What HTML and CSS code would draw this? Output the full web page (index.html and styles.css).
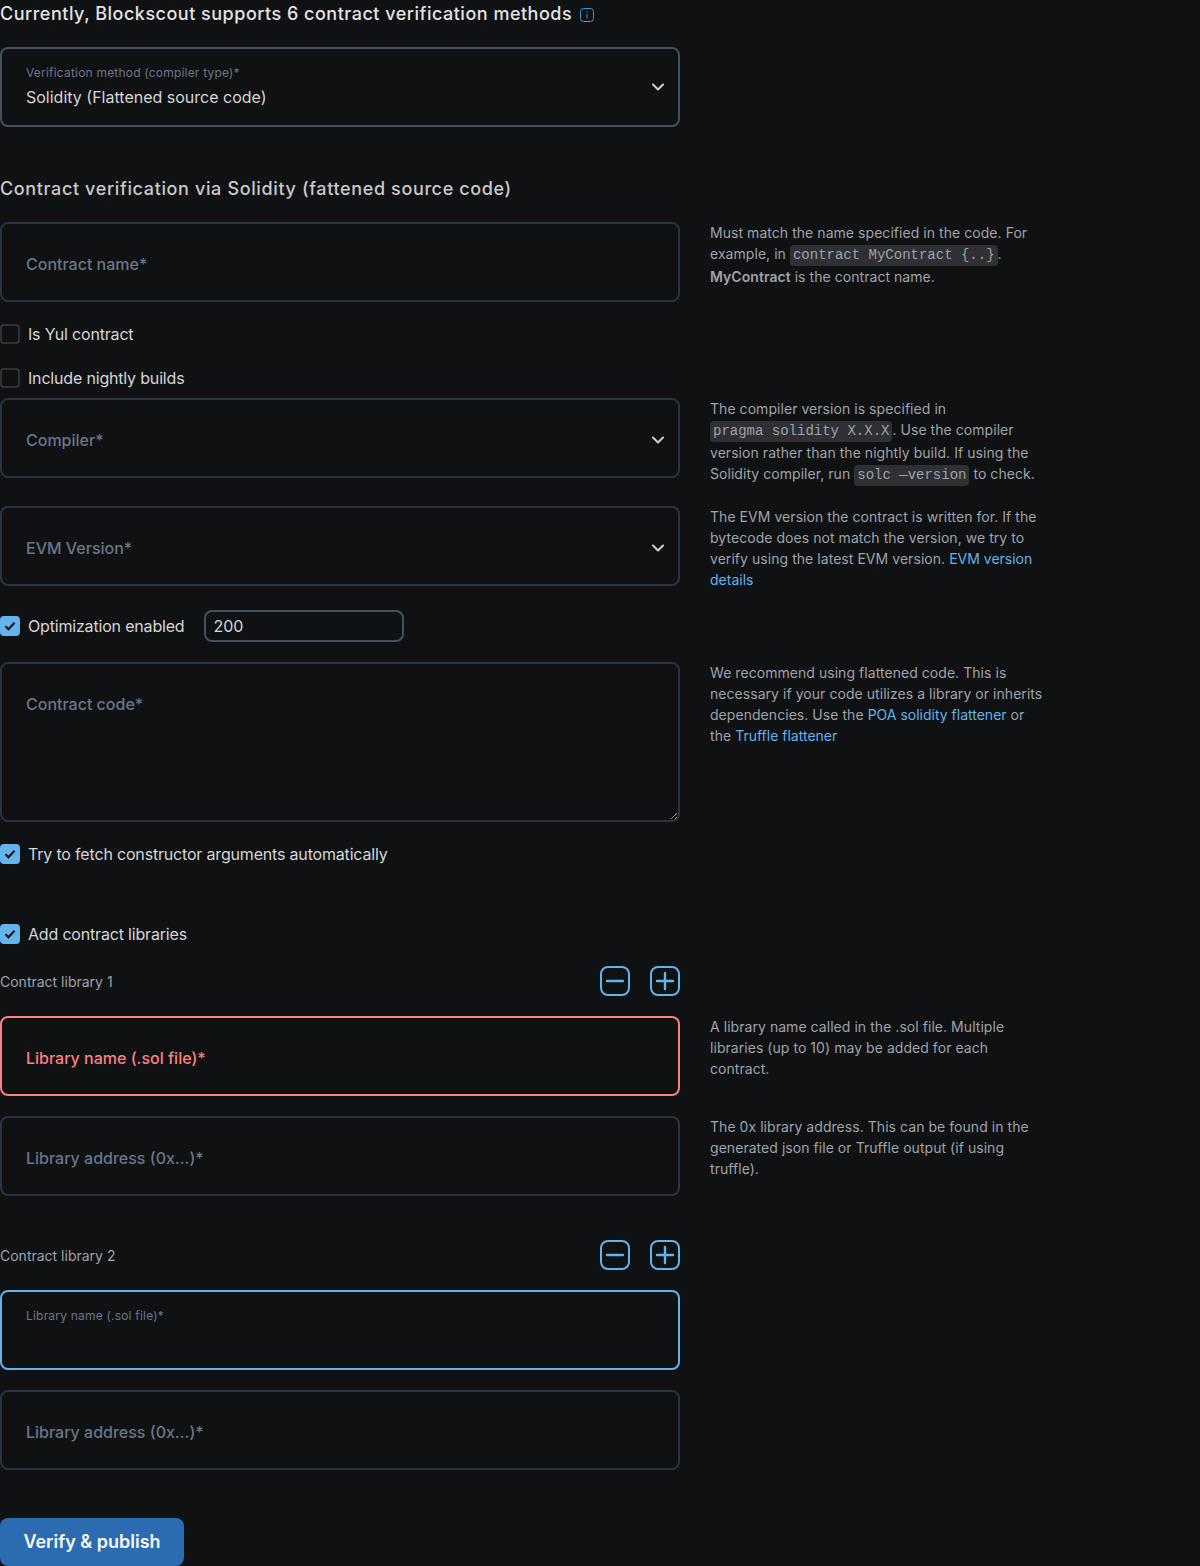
FILE: index.html
```html
<!DOCTYPE html>
<html>
<head>
    <meta charset="utf-8">
    <link rel="stylesheet" href="styles.css">
</head>
<body>
    <h2 class="title">Currently, Blockscout supports 6 contract verification methods
        <svg class="info" width="14" height="14" viewBox="0 0 14 14"><rect x=".5" y=".5" width="13" height="13" rx="3"/><path class="info-dot" d="M7 3.4v1.4M7 6.2v4.2"/></svg>
    </h2>

    <form>
        <div class="select select-filled">
            <div>
                <div class="float-label">Verification method (compiler type)*</div>
                <div class="select-value">Solidity (Flattened source code)</div>
            </div>
            <svg class="chevron" width="12" height="8" viewBox="0 0 12 8"><path d="M1 1.5l5 5 5-5"/></svg>
        </div>

        <h3 class="subtitle">Contract verification via Solidity (fattened source code)</h3>

        <div class="row">
            <input class="field" placeholder="Contract name*">
            <div class="hint">Must match the name specified in the code. For example, in <code>contract MyContract {..}</code>. <b>MyContract</b> is the contract name.</div>
        </div>

        <label class="check gap-22"><span class="box"></span>Is Yul contract</label>
        <label class="check gap-24"><span class="box"></span>Include nightly builds</label>

        <div class="row gap-10">
            <div class="select"><span>Compiler*</span><svg class="chevron" width="12" height="8" viewBox="0 0 12 8"><path d="M1 1.5l5 5 5-5"/></svg></div>
            <div class="hint">The compiler version is specified in <code>pragma solidity X.X.X</code>. Use the compiler version rather than the nightly build. If using the Solidity compiler, run <code>solc —version</code> to check.</div>
        </div>

        <div class="row gap-20">
            <div class="select"><span>EVM Version*</span><svg class="chevron" width="12" height="8" viewBox="0 0 12 8"><path d="M1 1.5l5 5 5-5"/></svg></div>
            <div class="hint">The EVM version the contract is written for. If the bytecode does not match the version, we try to verify using the latest EVM version. <a href="#">EVM version details</a></div>
        </div>

        <div class="optimization gap-20">
            <label class="check"><span class="box box-on"><svg width="12" height="10" viewBox="0 0 12 10"><path d="M1.5 5.2l3 3 6-6.4"/></svg></span>Optimization enabled</label>
            <input class="runs" value="200">
        </div>

        <div class="row gap-20">
            <textarea class="field code-field" placeholder="Contract code*"></textarea>
            <div class="hint">We recommend using flattened code. This is necessary if your code utilizes a library or inherits dependencies. Use the <a href="#">POA solidity flattener</a> or the <a href="#">Truffle flattener</a></div>
        </div>

        <label class="check gap-22"><span class="box box-on"><svg width="12" height="10" viewBox="0 0 12 10"><path d="M1.5 5.2l3 3 6-6.4"/></svg></span>Try to fetch constructor arguments automatically</label>
        <label class="check gap-60"><span class="box box-on"><svg width="12" height="10" viewBox="0 0 12 10"><path d="M1.5 5.2l3 3 6-6.4"/></svg></span>Add contract libraries</label>

        <div class="lib-head gap-22">
            <span>Contract library 1</span>
            <button type="button" class="square"><svg width="30" height="30" viewBox="0 0 30 30"><path d="M7 15h16"/></svg></button>
            <button type="button" class="square"><svg width="30" height="30" viewBox="0 0 30 30"><path d="M7 15h16M15 7v16"/></svg></button>
        </div>
        <div class="row gap-20">
            <input class="field field-error" placeholder="Library name (.sol file)*">
            <div class="hint">A library name called in the .sol file. Multiple libraries (up to 10) may be added for each contract.</div>
        </div>
        <div class="row gap-20">
            <input class="field" placeholder="Library address (0x...)*">
            <div class="hint">The 0x library address. This can be found in the generated json file or Truffle output (if using truffle).</div>
        </div>

        <div class="lib-head gap-44">
            <span>Contract library 2</span>
            <button type="button" class="square"><svg width="30" height="30" viewBox="0 0 30 30"><path d="M7 15h16"/></svg></button>
            <button type="button" class="square"><svg width="30" height="30" viewBox="0 0 30 30"><path d="M7 15h16M15 7v16"/></svg></button>
        </div>
        <div class="row gap-20">
            <div class="field field-focus"><div class="float-label">Library name (.sol file)*</div></div>
        </div>
        <div class="row gap-20">
            <input class="field" placeholder="Library address (0x...)*">
        </div>

        <button type="button" class="submit">Verify &amp; publish</button>
    </form>
</body>
</html>
```

FILE: styles.css
```css
body {
    font-family: "Inter", "Liberation Sans", sans-serif;
    font-size: 16px;
    line-height: 24px;
    background-color: #101112;
    color: #d6d6d7;
    margin: 0;
    height: 1566px;
    overflow: hidden;
}

.title {
    font-size: 18px;
    font-weight: 500;
    line-height: 28px;
    letter-spacing: 0.5px;
    color: #e3e3e4;
    margin: 0 0 19px;
    white-space: nowrap;
}

.info {
    vertical-align: -2px;
    margin-left: 3px;
}

.info rect {
    fill: none;
    stroke: #4299e1;
}

.info-dot {
    fill: none;
    stroke: #4299e1;
    stroke-width: 1;
}

.subtitle {
    font-size: 18px;
    font-weight: 500;
    line-height: 28px;
    letter-spacing: 0.63px;
    color: #c9c9ca;
    margin: 48px 0 19px;
    white-space: nowrap;
}

.row {
    display: grid;
    grid-template-columns: 680px 335px;
    column-gap: 30px;
    align-items: start;
}

.gap-10 { margin-top: 10px; }
.gap-20 { margin-top: 20px; }
.gap-22 { margin-top: 22px; }
.gap-24 { margin-top: 24px; }
.gap-44 { margin-top: 44px; }
.gap-60 { margin-top: 60px; }

.field,
.select {
    display: block;
    box-sizing: border-box;
    width: 680px;
    height: 80px;
    margin: 0;
    padding: 4px 24px 0;
    font: inherit;
    font-weight: 500;
    color: #69778a;
    background: transparent;
    border: 2px solid #2b3442;
    border-radius: 8px;
    outline: none;
}

.field::placeholder {
    color: #69778a;
    opacity: 1;
}

.select {
    display: flex;
    align-items: center;
    justify-content: space-between;
    padding-right: 14px;
}

.select-filled {
    border-color: #434f62;
    padding-top: 0;
}

.select-value {
    font-weight: 400;
    color: #d6d6d7;
    margin-top: 4px;
}

.float-label {
    font-size: 12px;
    font-weight: 400;
    line-height: 16px;
    letter-spacing: 0.2px;
    color: #69778a;
}

.chevron path {
    fill: none;
    stroke: #d0d0d1;
    stroke-width: 2;
    stroke-linecap: round;
    stroke-linejoin: round;
}

.field-error {
    border-color: #fc8181;
}

.field-error::placeholder {
    color: #fc8181;
}

.field-focus {
    border-color: #63b3ed;
    padding-top: 16px;
}

.code-field {
    height: 160px;
    padding-top: 28px;
    line-height: 24px;
    resize: vertical;
}

.check {
    display: flex;
    align-items: center;
    gap: 8px;
    height: 20px;
    letter-spacing: -0.18px;
}

.box {
    box-sizing: border-box;
    display: flex;
    align-items: center;
    justify-content: center;
    width: 20px;
    height: 20px;
    border: 2px solid #2f3338;
    border-radius: 4px;
}

.box-on {
    background: #63b3ed;
    border-color: #63b3ed;
}

.box-on path {
    fill: none;
    stroke: #101112;
    stroke-width: 2;
}

.optimization {
    display: flex;
    align-items: center;
    gap: 20px;
}

.runs {
    box-sizing: border-box;
    width: 200px;
    height: 32px;
    padding: 0 7px;
    font: inherit;
    color: #d6d6d7;
    background: transparent;
    border: 2px solid #434f62;
    border-radius: 8px;
    outline: none;
}

.hint {
    font-size: 14px;
    line-height: 21px;
    letter-spacing: 0.05px;
    color: #9fa3ab;
}

.hint b {
    font-weight: 600;
}

.hint a {
    color: #63b3ed;
    letter-spacing: 0;
    text-decoration: none;
}

.hint code {
    display: inline-block;
    font-family: "Liberation Mono", monospace;
    font-size: 14px;
    line-height: 21px;
    letter-spacing: 0;
    padding: 0 3px;
    background: #2e3033;
    border-radius: 4px;
}

.lib-head {
    display: flex;
    align-items: center;
    gap: 20px;
    width: 680px;
    font-size: 14px;
    color: #9fa3ab;
}

.lib-head span {
    margin-right: auto;
    padding-top: 2px;
}

.square {
    box-sizing: border-box;
    width: 30px;
    height: 30px;
    padding: 0;
    background: transparent;
    border: 2px solid #63b3ed;
    border-radius: 8px;
}

.square svg {
    display: block;
    margin: -2px;
}

.square path {
    fill: none;
    stroke: #63b3ed;
    stroke-width: 2.4;
    stroke-linecap: round;
}

.submit {
    display: block;
    box-sizing: border-box;
    width: 184px;
    height: 48px;
    margin-top: 48px;
    padding: 0;
    font: inherit;
    font-size: 18px;
    font-weight: 600;
    color: #f5f7fa;
    background: #2b6cb0;
    border: none;
    border-radius: 8px;
}
```
